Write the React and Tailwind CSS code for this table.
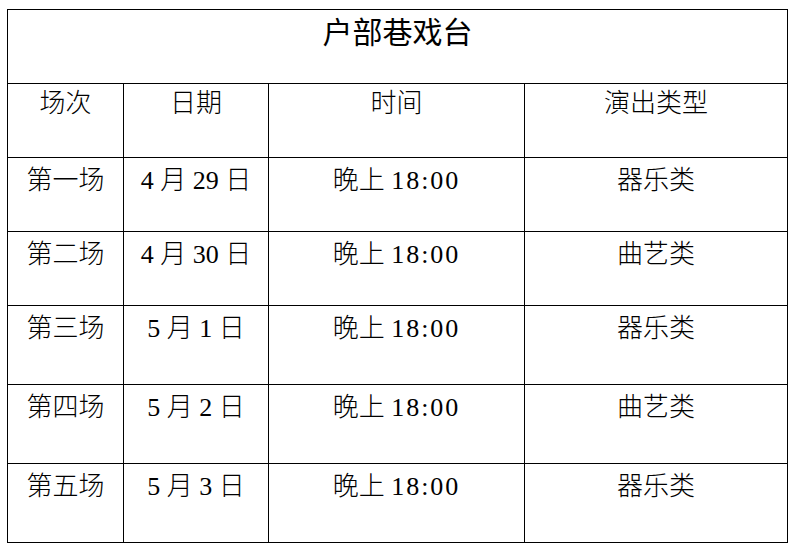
import React from "react";

const rows = [
  { no: "第一场", date: "4 月 29 日", type: "器乐类", h: "h-[74px]" },
  { no: "第二场", date: "4 月 30 日", type: "曲艺类", h: "h-[74px]" },
  { no: "第三场", date: "5 月 1 日", type: "器乐类", h: "h-[79px]" },
  { no: "第四场", date: "5 月 2 日", type: "曲艺类", h: "h-[79px]" },
  { no: "第五场", date: "5 月 3 日", type: "器乐类", h: "h-[79px]" },
];

export default function App() {
  return (
    <div
      className="w-[793px] h-[548px] bg-white pt-[9px] pl-[7px] text-black font-light"
      style={{ fontFamily: '"Liberation Serif", "Noto Sans CJK SC", serif' }}
    >
      <table className="table-fixed border-collapse w-[780px]">
        <colgroup>
          <col className="w-[116px]" />
          <col className="w-[145px]" />
          <col className="w-[256px]" />
          <col className="w-[263px]" />
        </colgroup>
        <tbody>
          <tr className="h-[74px]">
            <td
              colSpan={4}
              className="border border-black align-top text-center text-[30px] leading-[38px] pt-[4px] font-normal"
            >
              户部巷戏台
            </td>
          </tr>
          <tr className="h-[74px] text-[26px] leading-[32px]">
            <td className="border border-black align-top text-center pt-[4px]">场次</td>
            <td className="border border-black align-top text-center pt-[4px]">日期</td>
            <td className="border border-black align-top text-center pt-[4px]">时间</td>
            <td className="border border-black align-top text-center pt-[4px]">演出类型</td>
          </tr>
          {rows.map((r) => (
            <tr key={r.no} className={`${r.h} text-[26px] leading-[32px]`}>
              <td className="border border-black align-top text-center pt-[7px]">{r.no}</td>
              <td className="border border-black align-top text-center pt-[7px]">{r.date}</td>
              <td className="border border-black align-top text-center pt-[7px]">
                晚上 <span className="tracking-[2px]">18:00</span>
              </td>
              <td className="border border-black align-top text-center pt-[7px]">{r.type}</td>
            </tr>
          ))}
        </tbody>
      </table>
    </div>
  );
}
